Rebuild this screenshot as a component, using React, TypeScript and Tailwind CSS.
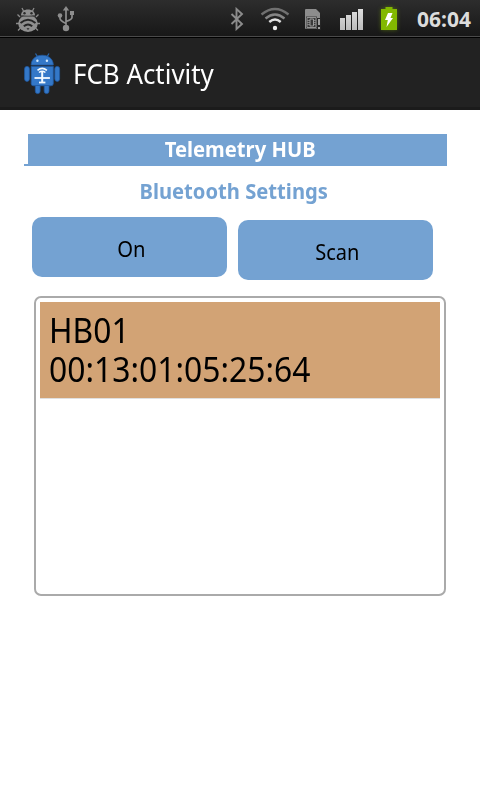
import React from "react";

function BugIcon() {
  return (
    <svg className="h-[26px] w-6" viewBox="0 0 24 26" fill="none">
      <g stroke="#8b8b8b" strokeWidth="1.3">
        <path d="M7.500 4L6 1M16.500 4L18 1M4 10L1.500 7.500M20 10l2.500-2.500M3 16.500H0M21 16.500h3M4.500 21L2 23.500M19.500 21l2.500 2.500" />
      </g>
      <path d="M5 8.500C5 4.500 8 2.500 12 2.500s7 2 7 6z" fill="#8f8f8f" />
      <ellipse cx="12" cy="16.500" rx="9.800" ry="8.500" fill="#8f8f8f" />
      <path d="M4.500 9.200h15" stroke="#444" strokeWidth="1" />
      <circle cx="8.500" cy="6.300" r="1.200" fill="#2b2b2b" />
      <circle cx="15.500" cy="6.300" r="1.200" fill="#2b2b2b" />
      <path d="M4.500 16q7.500-6.500 15 0M7.800 19.300q4.200-3.600 8.400 0" stroke="#252525" strokeWidth="1.900" />
      <path d="M10.500 21.200h3L12 23z" fill="#252525" />
    </svg>
  );
}

function UsbIcon() {
  return (
    <svg className="h-[26px] w-[18px]" viewBox="0 0 18 26" fill="none">
      <path d="M9 23V3M3 10v2.500q0 2 6 5M15 7v4.500q0 2-6 4" stroke="#8d8d8d" strokeWidth="1.700" />
      <path d="M9 0l3.200 4.500H5.800z" fill="#8d8d8d" />
      <circle cx="9" cy="22" r="3.200" fill="#8d8d8d" />
      <circle cx="3" cy="9.500" r="2.300" fill="#8d8d8d" />
      <path d="M13 5h4v4h-4z" fill="#8d8d8d" />
    </svg>
  );
}

function BluetoothIcon() {
  return (
    <svg className="h-6 w-3.5" viewBox="0 0 14 24" fill="none">
      <path d="M1.500 7L12 17l-5.500 5V2L12 7 1.500 17" stroke="#8c8c8c" strokeWidth="1.900" />
    </svg>
  );
}

function WifiIcon() {
  return (
    <svg className="h-6 w-[30px]" viewBox="0 0 30 24" fill="none">
      <path d="M1.500 7.500q13.500-11 27 0" stroke="#707070" strokeWidth="2.300" />
      <path d="M5.500 11.500q9.500-8 19 0" stroke="#858585" strokeWidth="2.300" />
      <path d="M9.300 15q5.700-5 11.400 0" stroke="#e0e0e0" strokeWidth="2.400" />
      <circle cx="15" cy="21" r="2.200" fill="#ededed" />
    </svg>
  );
}

function SimIcon() {
  return (
    <svg className="h-[22px] w-4" viewBox="0 0 16 22" fill="none">
      <path d="M0 1q0-1 1-1h10l4 4v5h-2v11H1q-1 0-1-1z" fill="#8d8d8d" />
      <path d="M1 7.500h11v12H1z" fill="#3a3a3a" />
      <path d="M2 8.500h9v10H2z" stroke="#939393" />
      <path d="M2 11.500h3m-3 2h3m-3 2h3m4-4h2m-2 2h2m-2 2h2" stroke="#858585" strokeWidth=".9" />
      <path d="M5 10h3.500v7H5z" stroke="#999" />
      <path d="M12 9h4v12h-4z" fill="#252525" />
      <path d="M13 10h2v6h-2zM13 18h2v2h-2z" fill="#a0a0a0" />
    </svg>
  );
}

function SignalIcon() {
  return (
    <svg className="h-[22px] w-6" viewBox="0 0 24 22">
      <defs>
        <linearGradient id="signal" x2="0" y2="1">
          <stop stopColor="#dedede" />
          <stop offset="1" stopColor="#bcbcbc" />
        </linearGradient>
      </defs>
      <path d="M0 10h5v12H0zM6 7h5v15H6zM12 4h5v18h-5zM18 1h5v21h-5z" fill="url(#signal)" />
    </svg>
  );
}

function BatteryIcon() {
  return (
    <svg className="h-6 w-4 overflow-visible drop-shadow-[0_0_2px_rgba(130,180,0,0.45)]" viewBox="0 0 16 24">
      <path d="M4.500 0h7v2H16v21H0V2h4.500z" fill="#82b800" />
      <path d="M7 6h4.500L9.500 11H12L5.500 20l1.300-7H4z" fill="#fff" />
    </svg>
  );
}

function RobotIcon() {
  return (
    <svg className="h-[44px] w-10 shrink-0" viewBox="0 0 40 44">
      <path d="M13.500 1.500l2.500 4M27 1.500l-2.500 4" stroke="#2a66ab" strokeWidth="1.300" />
      <g fill="#3478c8" stroke="#215ba3" strokeWidth="0.8">
        <path d="M9.200 13C9.200 0 31.300 0 31.300 13z" />
        <path d="M9.200 14.400h22.100v17.100q0 2.300-2.300 2.300H11.500q-2.300 0-2.300-2.300z" />
        <rect x="2.600" y="14.400" width="4.800" height="15" rx="2.400" />
        <rect x="32.800" y="14.400" width="4.800" height="15" rx="2.400" />
        <path d="M13.300 33.500h4.800v5.700q0 2.400-2.400 2.400t-2.400-2.400zM22.200 33.500H27v5.700q0 2.400-2.400 2.400t-2.400-2.400z" />
      </g>
      <circle cx="15.400" cy="8.700" r="1.200" fill="#d6ecff" />
      <circle cx="24.900" cy="8.700" r="1.200" fill="#d6ecff" />
      <g fill="none" stroke="#f3faff">
        <path d="M15.500 18.300q4.700-3.800 9.400 0" strokeWidth="1.700" />
        <path d="M17 20.500q3.200-2.500 6.400 0" strokeWidth="1.500" />
        <path d="M20.200 19v11.500" strokeWidth="2" />
        <path d="M12.500 26h15.400" strokeWidth="1.800" />
        <path d="M17 30.500h6.400" strokeWidth="1.800" />
      </g>
    </svg>
  );
}

export default function App() {
  return (
    <div className="flex h-[800px] w-[480px] flex-col overflow-hidden bg-white font-['Noto_Sans',sans-serif]">
      <header className="flex h-[38px] items-start border-b border-black bg-linear-to-b from-[#2d2d2d] to-[#171717]">
        <div className="flex h-[37px] w-full border-b border-[#4a4a4a]">
          <div className="ml-4 mt-[7px]"><BugIcon /></div>
          <div className="ml-[17px] mt-1.5"><UsbIcon /></div>
          <div className="ml-[155px] mt-[7px]"><BluetoothIcon /></div>
          <div className="ml-4 mt-[7px]"><WifiIcon /></div>
          <div className="ml-[15px] mt-[9px]"><SimIcon /></div>
          <div className="ml-[19px] mt-2"><SignalIcon /></div>
          <div className="ml-[17px] mt-[7px]"><BatteryIcon /></div>
          <time className="ml-5 mt-[3px] origin-left whitespace-nowrap text-[21px] leading-8 font-bold text-[#dcdcdc]">06:04</time>
        </div>
      </header>
      <div className="flex h-[72px] items-start border-b-3 border-[#1b1b1b] bg-[#222]">
        <div className="ml-[22px] mt-[14px]"><RobotIcon /></div>
        <h1 className="ml-[11px] mt-[15px] origin-left scale-x-[0.925] whitespace-nowrap text-[28px] leading-10 text-white">FCB Activity</h1>
      </div>
      <main className="flex flex-col pt-6">
        <div className="ml-6 flex h-8 w-[423px] items-end">
          <span className="h-0.5 w-1 bg-[#74a2d2]" />
          <h2 className="flex h-8 flex-1 justify-center bg-[#74a2d2] pl-[5px] text-[22px] leading-[29px] font-bold text-white">
            <span className="origin-center scale-x-[0.918] whitespace-nowrap">Telemetry HUB</span>
          </h2>
        </div>
        <h3 className="flex h-[51px] justify-center pt-[9px] pr-[13px] text-[22px] leading-[31px] font-bold text-[#74a2d2]">
          <span className="origin-center scale-x-[0.917] whitespace-nowrap">Bluetooth Settings</span>
        </h3>
        <div className="ml-8 flex gap-[11px]">
          <button className="flex h-[60px] w-[195px] items-center justify-center rounded-[10px] bg-[#74a2d2] pt-[3px] pl-[3px] text-[22px] text-black">
            <span className="origin-center scale-x-[0.92]">On</span>
          </button>
          <button className="mt-[3px] flex h-[60px] w-[195px] items-center justify-center rounded-[10px] bg-[#74a2d2] pt-[3px] pl-[3px] text-[22px] text-black">
            <span className="origin-center scale-x-[0.91]">Scan</span>
          </button>
        </div>
        <section className="mt-4 ml-[34px] h-[300px] w-[412px] rounded-[7px] border-2 border-[#aaa] p-1">
          <div className="h-[97px] border-b border-[#e0e0e0] bg-[#d2a375] pt-[9px] pl-[9px] text-[34px] leading-[39px] text-black">
            <div className="origin-left scale-x-[0.935]">HB01</div>
            <div className="origin-left scale-x-[0.937]">00:13:01:05:25:64</div>
          </div>
        </section>
      </main>
    </div>
  );
}
